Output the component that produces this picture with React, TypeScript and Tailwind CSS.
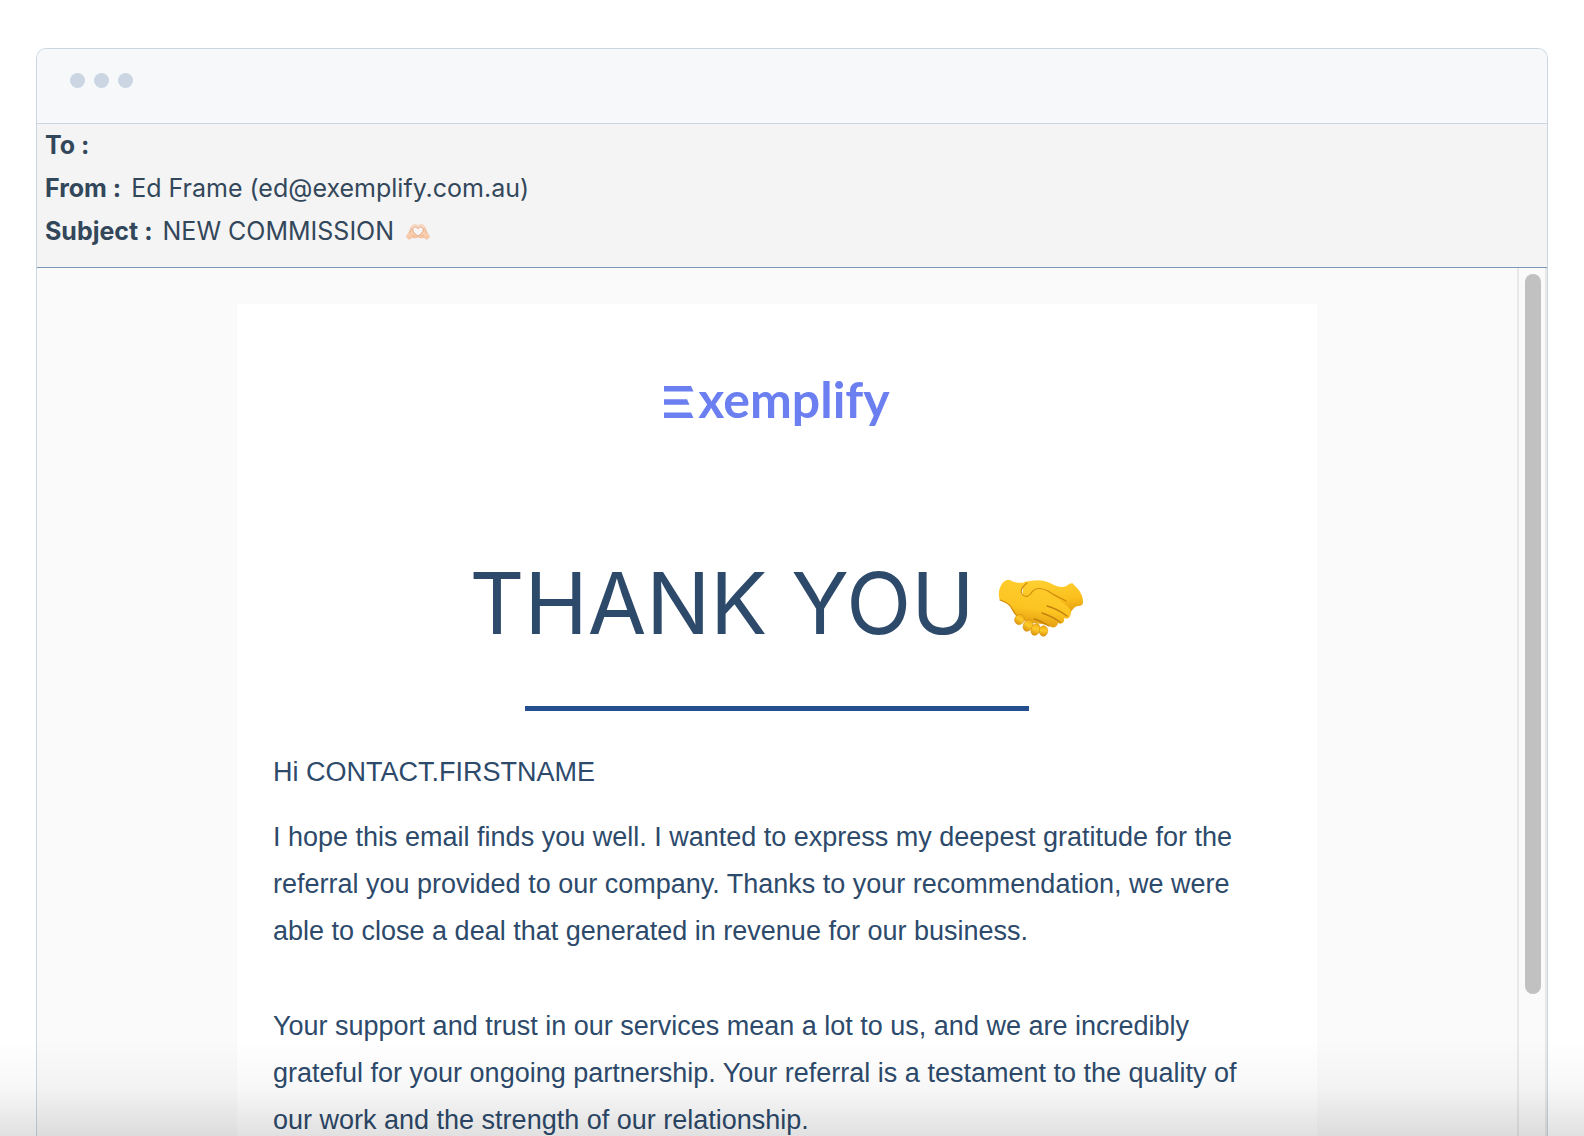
import type { ReactNode } from "react";

function HeartHands() {
  return (
    <svg viewBox="0 0 24 16" className="ml-3 inline-block h-4 w-6 align-[0px]" role="img" aria-label="Heart hands">
      <defs>
        <linearGradient id="skin" x1="0" y1="0" x2="0" y2="1">
          <stop offset="0" stopColor="#fde3cf" />
          <stop offset="1" stopColor="#f6c4a0" />
        </linearGradient>
      </defs>
      <path
        d="M.3 13 4 6C4.800 2.200 6.600.6 8.800.6c1.500 0 2.600.7 3.200 1.700C12.600 1.300 13.700.6 15.200.6c2.200 0 4 1.600 4.800 5.400l3.700 7-3.200 2.600-2.400-2.200c-2.200.9-4.600.7-6.100-.4-1.500 1.100-3.900 1.300-6.100.4l-2.400 2.200Z"
        fill="url(#skin)"
        stroke="#efb994"
        strokeWidth=".5"
      />
      <path
        d="M12 12.300C8.800 9.800 6.700 8 6.700 5.700 6.700 4.100 7.800 3 9.300 3c1.200 0 2.200.7 2.700 1.700C12.500 3.700 13.500 3 14.700 3c1.500 0 2.600 1.100 2.600 2.700 0 2.300-2.100 4.100-5.300 6.600Z"
        fill="#f6f6f6"
        stroke="#e09a70"
        strokeWidth=".9"
      />
      <path d="m5.600 4.500-1.800 5M18.400 4.500l1.800 5M6.200 11l3 1.600M17.800 11l-3 1.600" stroke="#e8a981" strokeWidth=".8" fill="none" />
    </svg>
  );
}

function Handshake() {
  return (
    <svg viewBox="0 0 86 60" className="mt-2.5 h-[60px] w-[86px]" role="img" aria-label="Handshake">
      <defs>
        <linearGradient id="left-hand" x1=".6" y1="0" x2=".35" y2="1">
          <stop offset="0" stopColor="#ffce2e" />
          <stop offset=".6" stopColor="#fcc421" />
          <stop offset="1" stopColor="#dd940d" />
        </linearGradient>
        <linearGradient id="right-hand" x1="0" y1="0" x2=".2" y2="1">
          <stop offset="0" stopColor="#ffd236" />
          <stop offset=".6" stopColor="#fbc01c" />
          <stop offset="1" stopColor="#e39a0c" />
        </linearGradient>
        <linearGradient id="finger" x1="0" y1="0" x2="0" y2="1">
          <stop offset="0" stopColor="#f0ae16" />
          <stop offset=".45" stopColor="#fecb29" />
          <stop offset="1" stopColor="#dc920d" />
        </linearGradient>
      </defs>
      <path d="M26 3 C36 1 44 0 52 4 C61 9 67 9 71 5 C74 4 75 4 76 6 C82 11 85 17 85 23 C85 26 83 27 80 27 C75 28 72 34 70 39 L50 36 L24 18Z" fill="url(#right-hand)" />
      <path d="M12 1 C15 3 21 5 29 3 C25 7 22 12 24 16 C27 19 31 18 34 13 C38 8 44 9 50 12 L69 27 C73 30 74 34 72 37 C71 40 68 40 66 39 C67 43 64 46 60 44 C59 49 54 50 50 46 L30 43 C20 40 17 35 13 28 C10 24 5 22 2 21 C-1 15 2 3 9 1Z" fill="url(#left-hand)" />
      <path d="M2 21 C8 23 11 25 13 28 C17 35 18 37 21 38" fill="none" stroke="#d18a0a" strokeWidth="1.200" strokeLinecap="round" />
      <path d="M29 4 C24 8 22 12 24 15 C27 19 31 18 34 13 C38 8 44 9 50 12 C55 16 61 18 68 22" fill="none" stroke="#cf8c10" strokeWidth="1.200" strokeLinecap="round" />
      <path d="m49 27 c8 2 13 5 20 10M44 34c7 2 12 5 18 9M36 40c5 1 10 4 15 7" stroke="#c3820f" strokeWidth="1.400" strokeLinecap="round" fill="none" />
      <ellipse cx="21.500" cy="40.500" rx="4.700" ry="5.200" fill="url(#finger)" stroke="#d6930d" strokeWidth=".6" transform="rotate(30 21.500 40.500)" />
      <ellipse cx="30" cy="46.500" rx="4.600" ry="6" fill="url(#finger)" stroke="#d6930d" strokeWidth=".6" transform="rotate(30 30 46.500)" />
      <ellipse cx="37.500" cy="50.500" rx="4.400" ry="6" fill="url(#finger)" stroke="#d6930d" strokeWidth=".6" transform="rotate(20 37.500 50.500)" />
      <ellipse cx="45.500" cy="52" rx="4.200" ry="5.200" fill="url(#finger)" stroke="#d6930d" strokeWidth=".6" transform="rotate(5 45.500 52)" />
    </svg>
  );
}

function Logo() {
  return (
    <div className="flex h-[60px] items-baseline justify-center text-[#6b7ff0]" role="img" aria-label="Exemplify">
      <svg viewBox="0 0 30 32" className="h-8 w-[30px]" fill="currentColor" aria-hidden="true">
        <path d="M0 0h27l2.500 5.500H0ZM0 13.300h23l2.500 5.500H0ZM0 26.500h27l2.500 5.500H0Z" />
      </svg>
      <span className="ml-1 font-['Lato',sans-serif] text-[50px] leading-[60px] font-bold">xemplify</span>
    </div>
  );
}

function Field({ label, children }: { label: string; children?: ReactNode }) {
  return (
    <div className="flex gap-2.5 whitespace-nowrap">
      <dt className="font-bold">{label} :</dt>
      <dd>{children}</dd>
    </div>
  );
}

export default function App() {
  return (
    <main className="relative flex h-screen flex-col overflow-hidden bg-white px-9 pt-12">
      <section className="flex min-h-0 flex-1 flex-col overflow-hidden rounded-t-[10px] border border-b-0 border-[#cbd6e2]">
        <header className="flex h-[75px] shrink-0 gap-[9px] border-b border-[#cbd6e2] bg-[#f6f8fa] pt-6 pl-[33px]">
          <span className="size-[15px] rounded-full bg-[#cbd6e2]" />
          <span className="size-[15px] rounded-full bg-[#cbd6e2]" />
          <span className="size-[15px] rounded-full bg-[#cbd6e2]" />
        </header>

        <dl className="h-[144px] shrink-0 border-b border-[#7c98b6] bg-[#f4f4f4] pl-2 font-['Inter',sans-serif] text-[25px] leading-[43px] text-[#33475b]">
          <Field label="To" />
          <Field label="From">Ed Frame (ed@exemplify.com.au)</Field>
          <Field label="Subject">
            NEW COMMISSION
            <HeartHands />
          </Field>
        </dl>

        <div className="flex min-h-0 flex-1 bg-[#fafafa]">
          <div className="min-w-0 flex-1 overflow-hidden pt-9">
            <article className="mx-auto max-w-[1080px] bg-white px-9 pt-[65px] pb-9 font-['Liberation_Sans',Arial,sans-serif] text-[#2d4a6b]">
              <Logo />
              <h1 className="mt-[121px] flex items-center justify-center gap-6 font-['Inter',sans-serif] text-[85px] leading-[108px]">
                THANK YOU
                <Handshake />
              </h1>
              <hr className="mx-auto mt-12 w-1/2 border-t-[5px] border-[#24508f]" />
              <div className="mt-[38px] text-[27px] leading-[47px]">
                <p>Hi CONTACT.FIRSTNAME</p>
                <p className="mt-[18px]">
                  I hope this email finds you well. I wanted to express my deepest gratitude for the referral you
                  provided to our company. Thanks to your recommendation, we were able to close a deal that generated
                  in revenue for our business.
                </p>
                <p className="mt-12">
                  Your support and trust in our services mean a lot to us, and we are incredibly grateful for your
                  ongoing partnership. Your referral is a testament to the quality of our work and the strength of our
                  relationship.
                </p>
              </div>
            </article>
          </div>
          <div className="flex w-[30px] shrink-0 justify-center border-x-2 border-[#e8e8e8] bg-[#fafafa] pt-1.5 pl-0.5" aria-hidden="true">
            <div className="h-[83.5%] w-4 rounded-full bg-[#c1c1c1]" />
          </div>
        </div>
      </section>
      <div className="pointer-events-none absolute inset-x-0 bottom-0 h-24 bg-linear-to-b from-transparent via-black/3 to-black/12" />
    </main>
  );
}
